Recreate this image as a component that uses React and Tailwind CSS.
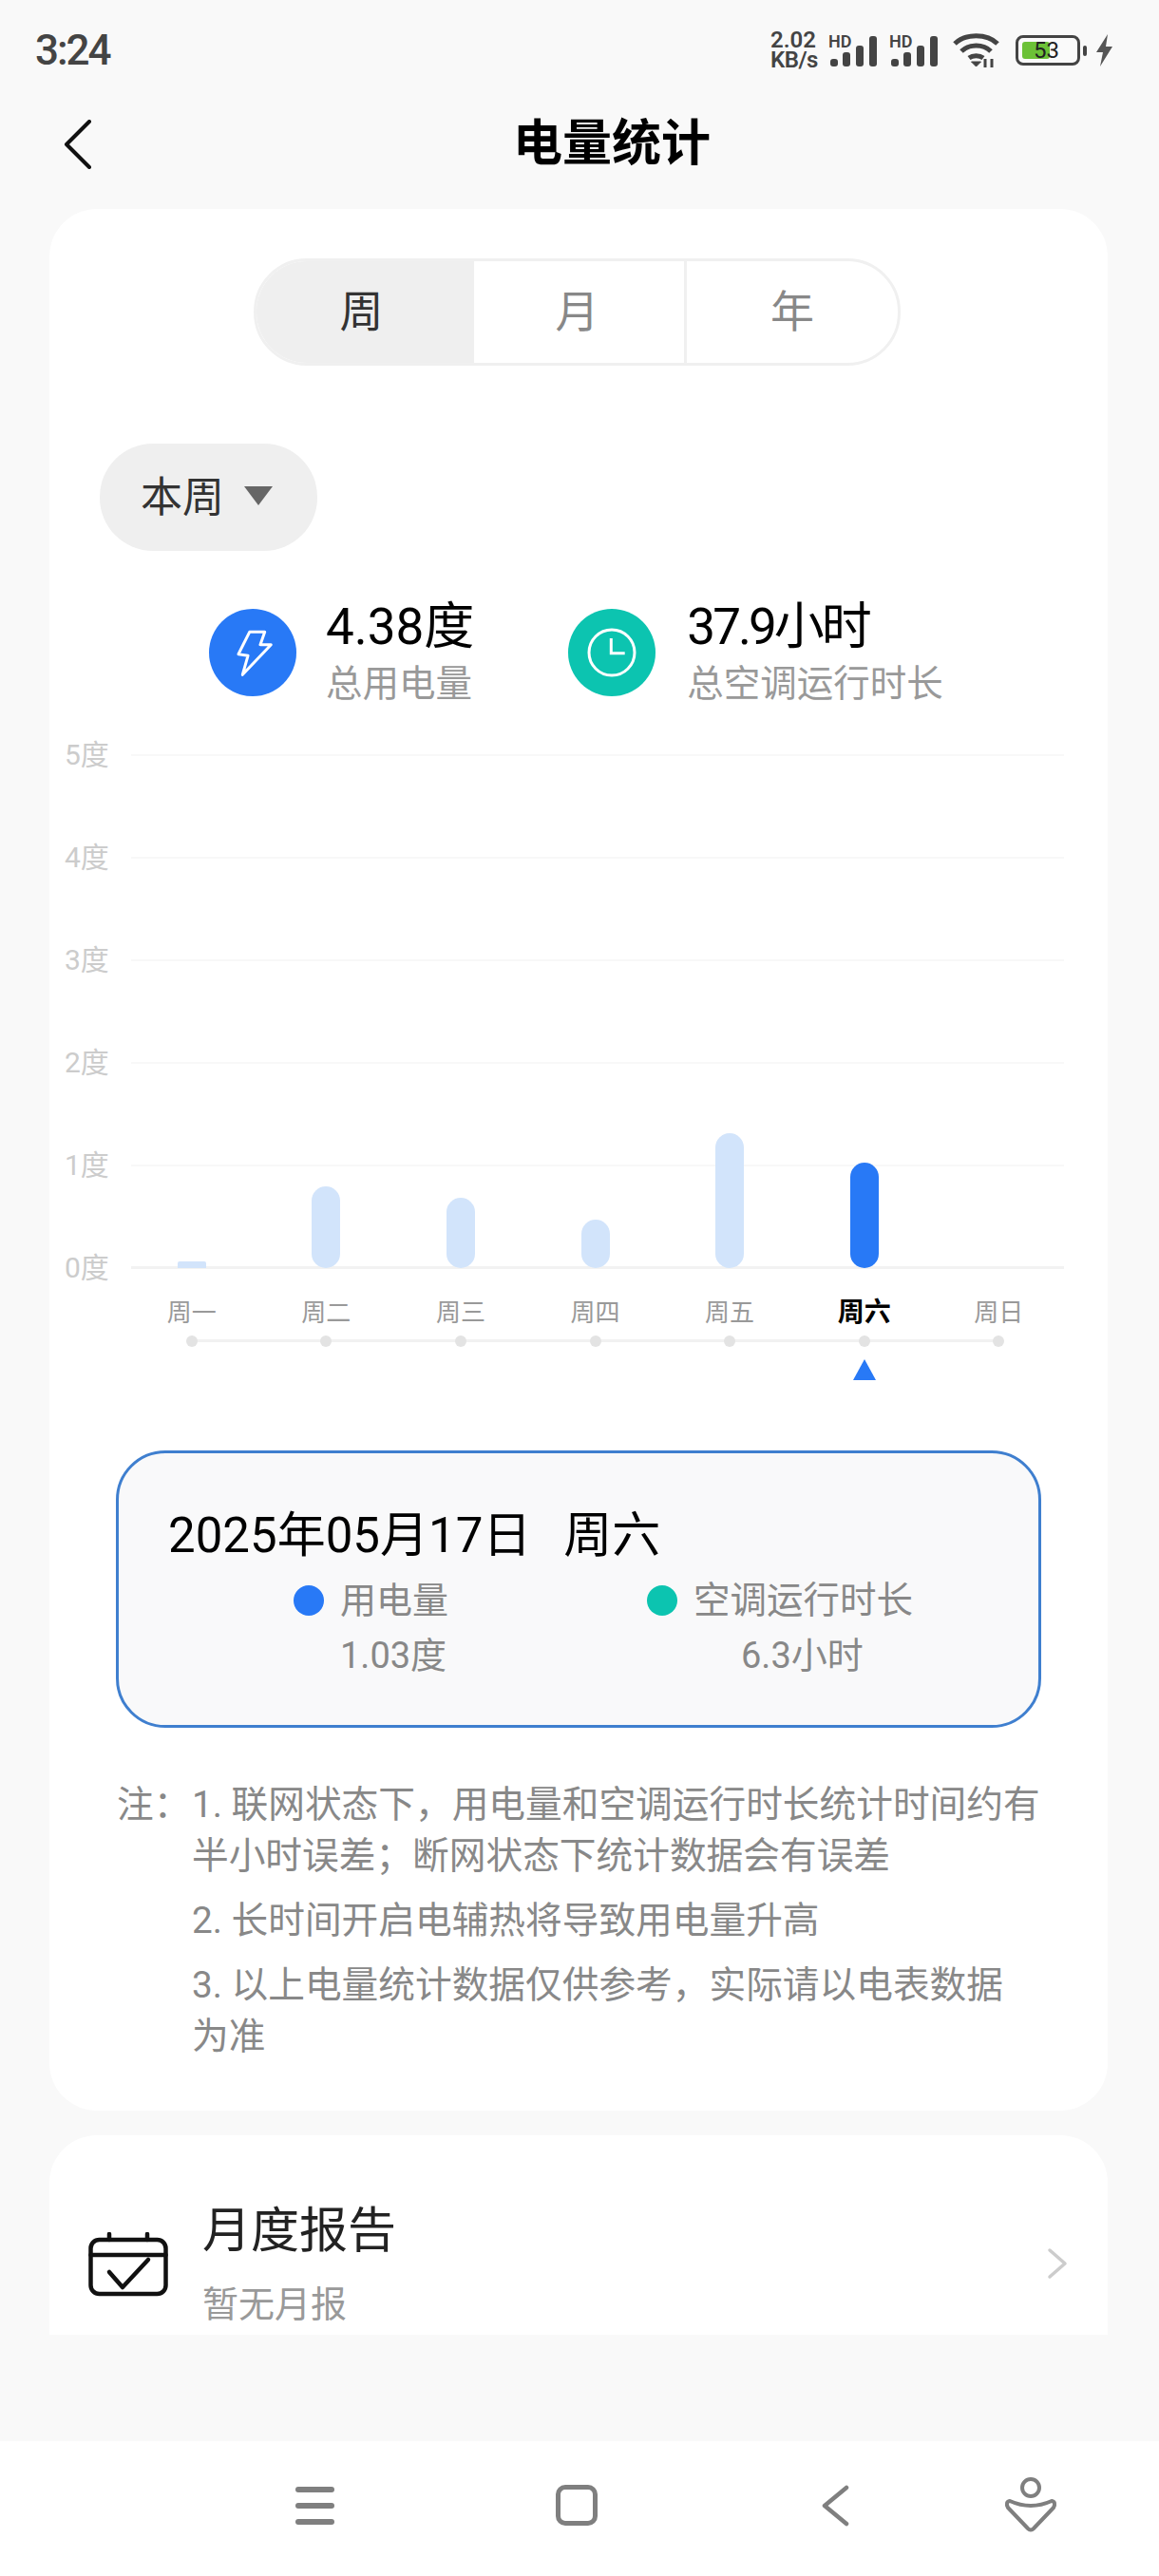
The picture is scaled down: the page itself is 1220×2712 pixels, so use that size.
// Electricity statistics screen
import React from 'react';

const days = [
  { label: '周一', height: 7 },
  { label: '周二', height: 86 },
  { label: '周三', height: 74 },
  { label: '周四', height: 51 },
  { label: '周五', height: 142 },
  { label: '周六', height: 111, active: true },
  { label: '周日', height: 0 },
];

const yLabels = ['5度', '4度', '3度', '2度', '1度', '0度'];

const SignalIcon = () => (
  <div className="relative w-[52px] h-[36px]">
    <span className="absolute left-0 top-0 text-[18px] leading-[17px] font-semibold text-[#444]">HD</span>
    <svg className="absolute left-0 top-0" width="52" height="36" viewBox="0 0 52 36" fill="#444">
      <rect x="2" y="27" width="8" height="8" rx="3" />
      <rect x="15" y="20" width="8" height="15" rx="3" />
      <rect x="29" y="13" width="8" height="22" rx="3" />
      <rect x="43" y="3" width="8" height="32" rx="3" />
    </svg>
  </div>
);

const StatusBar = () => (
  <div className="h-[104px] flex items-center justify-between pl-[37px] pr-[48px] pt-[2px]">
    <span className="text-[44px] leading-none font-medium text-[#444] tracking-[-2px]">3:24</span>
    <div className="flex items-center">
      <div className="w-[51px] text-[24px] leading-[21px] font-semibold text-[#444] whitespace-nowrap">
        <div>2.02</div>
        <div className="tracking-[-0.5px]">KB/s</div>
      </div>
      <div className="ml-[10px]"><SignalIcon /></div>
      <div className="ml-[12px]"><SignalIcon /></div>
      <svg className="ml-[15px]" width="49" height="38" viewBox="0 0 49 38" fill="none" stroke="#444" strokeWidth="5">
        <path d="M2 12 C13 1 36 1 47 12" />
        <path d="M9 20 C17 12 32 12 40 20" />
        <path d="M17 27 C21 24 28 24 32 27" />
        <path d="M24.5 36 l-5 -5 h10 z" fill="#444" strokeWidth="1" />
        <path d="M34 28 v9 M41 28 v9" strokeWidth="3" />
      </svg>
      <div className="ml-[17px] relative w-[68px] h-[32px] rounded-[8px] border-[3px] border-[#444] bg-[#fafafa] p-[4px]">
        <div className="w-[29px] h-full rounded-[3px] bg-[#6cc137]" />
        <span className="absolute left-[16px] top-[1px] text-[24px] leading-[24px] text-[#222]">53</span>
      </div>
      <div className="ml-[3px] w-[4px] h-[11px] rounded-full bg-[#444]" />
      <svg className="ml-[9px]" width="19" height="34" viewBox="0 0 19 34" fill="#555">
        <path d="M13 0 L1 19 H8 L5 34 L18 13 H11 Z" />
      </svg>
    </div>
  </div>
);

const Header = () => (
  <div className="h-[96px] mb-[20px] flex items-center">
    <svg className="ml-[67px]" width="30" height="52" viewBox="0 0 30 52" fill="none" stroke="#111" strokeWidth="4" strokeLinecap="round" strokeLinejoin="round">
      <path d="M27 2 L3 26 L27 50" />
    </svg>
    <h1 className="ml-[443px] text-[52px] leading-none font-bold text-black">电量统计</h1>
  </div>
);

const Segmented = () => (
  <div className="ml-[215px] w-[681px] h-[113px] flex rounded-[56px] border-[3px] border-[#f0f0f0] overflow-hidden">
    <div className="w-[229px] pr-[8px] flex items-center justify-center bg-[#efefef] text-[46px] text-[#333]">周</div>
    <div className="w-[224px] pr-[4px] flex items-center justify-center border-r-[3px] border-[#f0f0f0] text-[46px] text-[#888]">月</div>
    <div className="flex-1 flex items-center justify-center text-[46px] text-[#888]">年</div>
  </div>
);

const Stat = ({ color, icon, value, label, className, valueClass, gap }) => (
  <div className={`flex items-start ${className}`}>
    <div className={`mt-[9px] w-[92px] h-[92px] rounded-full flex items-center justify-center ${color}`}>{icon}</div>
    <div className={gap}>
      <div className={`text-[53px] leading-[56px] text-black ${valueClass}`}>{value}</div>
      <div className="mt-[7px] text-[38.5px] leading-[50px] text-[#999]">{label}</div>
    </div>
  </div>
);

const Chart = () => (
  <div className="relative ml-[16px] mt-[49px] w-[1052px]">
    {/* grid lines with the y axis labels */}
    <div className="flex flex-col gap-[107px]">
      {yLabels.map((y, i) => (
        <div key={y} className="h-[1px] flex items-center">
          <span className="w-[70px] text-[30px] text-[#ccc]">{y}</span>
          <div className={`flex-1 ${i === 5 ? 'h-[3px] bg-[#f2f2f2]' : 'h-[2px] bg-[#f8f8f8]'}`} />
        </div>
      ))}
    </div>
    {/* bars sit on top of the grid */}
    <div className="absolute left-[63px] bottom-0 w-[991px] flex items-end">
      {days.map((d) => (
        <div key={d.label} className="flex-1 flex justify-center">
          <div
            className={`w-[30px] ${d.height > 10 ? 'rounded-full' : 'rounded-t-[2px]'} ${d.active ? 'bg-[#2879f6]' : 'bg-[#d2e4fb]'}`}
            style={{ height: d.height }}
          />
        </div>
      ))}
    </div>
  </div>
);

const DayAxis = () => (
  <div className="ml-[79px] w-[991px]">
    <div className="flex mt-[29px]">
      {days.map((d) => (
        <div key={d.label} className={`flex-1 text-center h-[36px] leading-[36px] ${d.active ? 'text-[28px] font-bold text-black' : 'text-[26px] text-[#999]'}`}>
          {d.label}
        </div>
      ))}
    </div>
    <div className="relative mt-[6px] flex h-[12px]">
      <div className="absolute left-[71px] right-[71px] top-[4px] h-[3px] bg-[#f1f1f1]" />
      {days.map((d) => (
        <div key={d.label} className="relative flex-1 flex justify-center">
          <div className="w-[12px] h-[12px] rounded-full bg-[#e3e3e3]" />
        </div>
      ))}
    </div>
    <div className="flex mt-[13px]">
      {days.map((d) => (
        <div key={d.label} className="flex-1 flex justify-center h-[22px]">
          {d.active && (
            <svg width="24" height="22" viewBox="0 0 24 22" fill="#2879f6">
              <path d="M12 0 L24 22 H0 Z" />
            </svg>
          )}
        </div>
      ))}
    </div>
  </div>
);

const DetailBox = () => (
  <div className="ml-[70px] mt-[74px] w-[974px] h-[292px] rounded-[52px] border-[3px] border-[#3f7fcf] bg-[#f9f9fa] pt-[57px]">
    <div className="ml-[52px] text-[51px] leading-[60px] text-black whitespace-nowrap">
      2025年05月17日<span className="ml-[34px]">周六</span>
    </div>
    <div className="flex mt-[16px]">
      <div className="ml-[184px] flex items-center h-[44px]">
        <div className="w-[32px] h-[32px] rounded-full bg-[#2879f6]" />
        <span className="ml-[17px] text-[38px] text-[#888]">用电量</span>
      </div>
      <div className="ml-[209px] flex items-center h-[44px]">
        <div className="w-[32px] h-[32px] rounded-full bg-[#0cc4b0]" />
        <span className="ml-[17px] text-[38.5px] text-[#888]">空调运行时长</span>
      </div>
    </div>
    <div className="flex mt-[14px]">
      <div className="ml-[233px] w-[114px] text-[38px] leading-[44px] text-[#888] whitespace-nowrap">1.03度</div>
      <div className="ml-[308px] text-[38px] leading-[44px] text-[#888] whitespace-nowrap">6.3小时</div>
    </div>
  </div>
);

const Notes = () => (
  <div className="ml-[71px] mt-[54px] w-[1000px] flex text-[38.7px] leading-[54px] text-[#888]">
    <div className="w-[79px] shrink-0">注：</div>
    <div className="w-[915px] shrink-0">
      <p>1. 联网状态下，用电量和空调运行时长统计时间约有<br />半小时误差；断网状态下统计数据会有误差</p>
      <p className="mt-[14px]">2. 长时间开启电辅热将导致用电量升高</p>
      <p className="mt-[14px]">3. 以上电量统计数据仅供参考，实际请以电表数据<br />为准</p>
    </div>
  </div>
);

const BottomNav = () => (
  <div className="mt-[112px] h-[142px] bg-white relative">
    <div className="absolute left-[311px] top-[48px] w-[41px] flex flex-col gap-[11px]">
      <div className="h-[6px] rounded-full bg-[#7f7f7f]" />
      <div className="h-[6px] rounded-full bg-[#7f7f7f]" />
      <div className="h-[6px] rounded-full bg-[#7f7f7f]" />
    </div>
    <div className="absolute left-[585px] top-[46px] w-[44px] h-[43px] rounded-[10px] border-[5px] border-[#7f7f7f]" />
    <svg className="absolute left-[863px] top-[46px]" width="32" height="44" viewBox="0 0 32 44" fill="none" stroke="#7f7f7f" strokeWidth="4.5" strokeLinejoin="round" strokeLinecap="round">
      <path d="M28 3 L5 22 L28 41" />
    </svg>
    <svg className="absolute left-[1056px] top-[37px]" width="58" height="60" viewBox="0 0 58 60" fill="none" stroke="#7f7f7f" strokeWidth="4" strokeLinejoin="round">
      <circle cx="29" cy="12" r="9" />
      <path d="M7 26 Q29 36 51 26 Q56 27 53 33 L32 55 Q29 58 26 55 L5 33 Q2 27 7 26 Z" />
    </svg>
  </div>
);

const App = () => (
  <div
    className="w-[1220px] h-[2712px] overflow-hidden bg-[#f9f9f9]"
    style={{ fontFamily: 'Roboto, "Noto Sans CJK SC", sans-serif' }}
  >
    <StatusBar />
    <Header />

    {/* main statistics card */}
    <div className="ml-[52px] mr-[54px] h-[2002px] rounded-[50px] bg-white pt-[52px]">
      <Segmented />
      <div className="ml-[53px] mt-[82px] w-[229px] h-[113px] rounded-[56px] bg-[#efefef] flex items-center pl-[43px]">
        <span className="text-[44px] text-[#333]">本周</span>
        <svg className="ml-[21px] mb-[4px]" width="30" height="20" viewBox="0 0 30 20" fill="#666">
          <path d="M0 0 H30 L15 20 Z" />
        </svg>
      </div>
      <div className="flex mt-[52px]">
        <Stat
          className="ml-[168px]"
          gap="ml-[31px]"
          color="bg-[#2879f6]"
          value="4.38度"
          label="总用电量"
          icon={
            <svg width="42" height="52" viewBox="0 0 42 52" fill="none" stroke="white" strokeWidth="3" strokeLinejoin="round">
              <path d="M17.7 4.3 H33.7 L29 17.7 H40.3 L10.3 49.3 L16 29.3 L6 27.7 Z" />
            </svg>
          }
        />
        <Stat
          className="ml-[99px]"
          gap="ml-[33px]"
          valueClass="tracking-[-3px]"
          color="bg-[#0cc4b0]"
          value="37.9小时"
          label="总空调运行时长"
          icon={
            <svg width="54" height="54" viewBox="0 0 54 54" fill="none" stroke="white" strokeWidth="3">
              <circle cx="27" cy="27" r="24" />
              <path d="M26.3 12 V27.7 H40.7" />
            </svg>
          }
        />
      </div>
      <Chart />
      <DayAxis />
      <DetailBox />
      <Notes />
    </div>

    {/* monthly report row, clipped at the bottom */}
    <div className="ml-[52px] mr-[54px] mt-[26px] h-[210px] rounded-t-[50px] bg-white flex items-start overflow-hidden">
      <svg className="ml-[41px] mt-[102px]" width="84" height="68" viewBox="0 0 84 68" fill="none" stroke="#111" strokeWidth="4.5" strokeLinejoin="round" strokeLinecap="round">
        <rect x="2.5" y="8" width="79" height="57" rx="9" />
        <path d="M2.5 24 H81.5" />
        <path d="M22 2 V8 M62 2 V8" />
        <path d="M22 42 L36 58 L63 29" />
      </svg>
      <div className="ml-[36px] mt-[72px]">
        <div className="text-[51px] leading-[58px] text-[#222]">月度报告</div>
        <div className="mt-[25px] text-[38px] leading-[46px] text-[#999]">暂无月报</div>
      </div>
      <svg className="ml-auto mr-[41px] mt-[118px]" width="24" height="34" viewBox="0 0 24 34" fill="none" stroke="#ccc" strokeWidth="3.5" strokeLinecap="round" strokeLinejoin="round">
        <path d="M4 3 L20 17 L4 31" />
      </svg>
    </div>

    <BottomNav />
  </div>
);

export default App;
